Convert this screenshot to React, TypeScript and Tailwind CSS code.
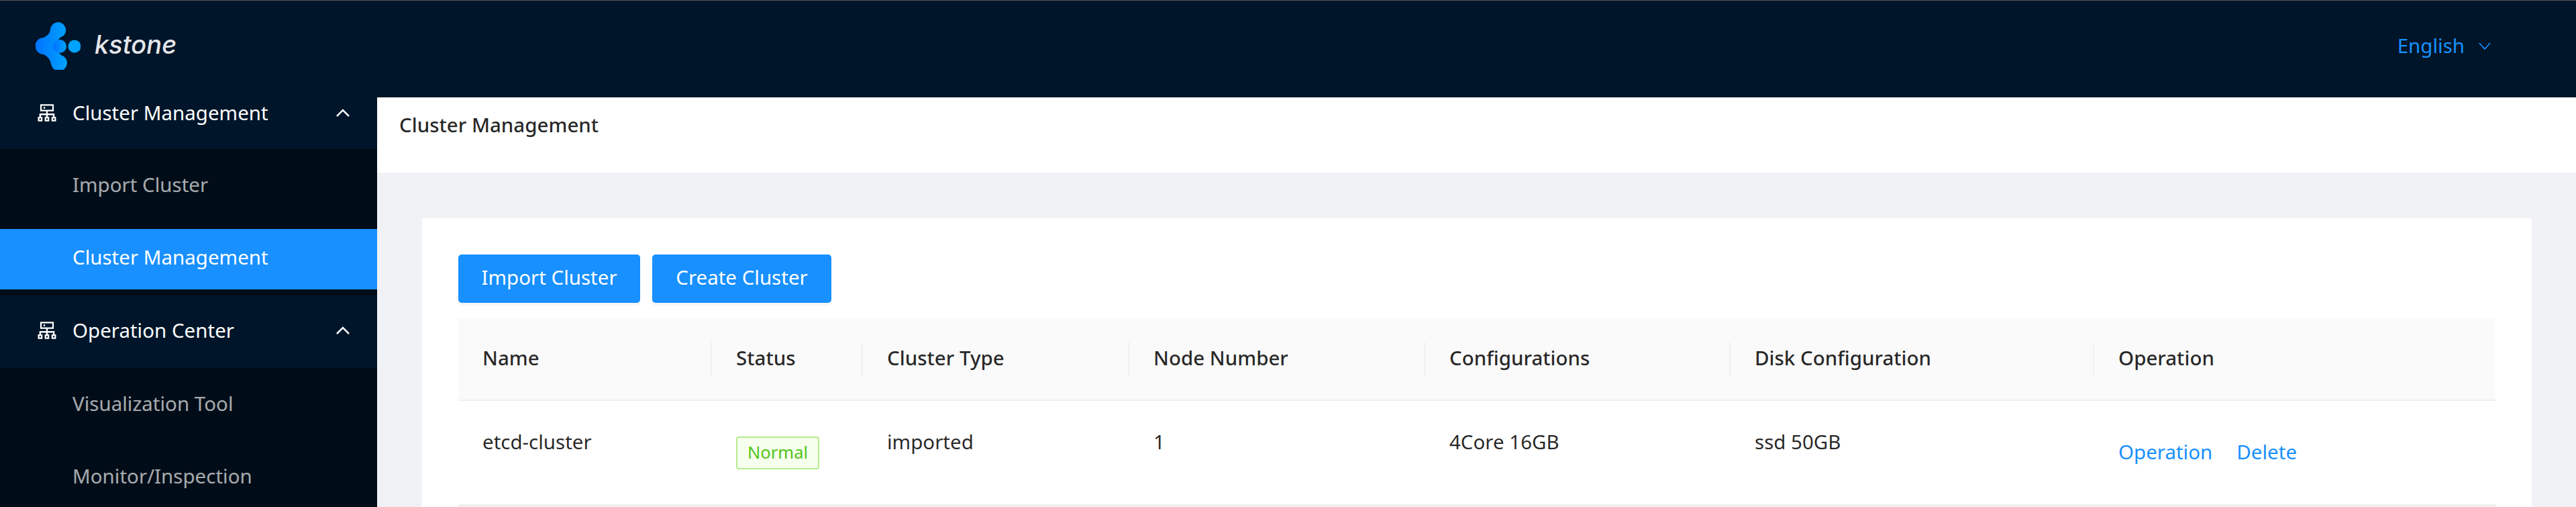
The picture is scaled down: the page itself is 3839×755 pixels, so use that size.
import { AiOutlineCluster } from 'react-icons/ai';

const columns = [
  { title: 'Name', width: 'w-[378px]' },
  { title: 'Status', width: 'w-[225px]' },
  { title: 'Cluster Type', width: 'w-[397px]' },
  { title: 'Node Number', width: 'w-[441px]' },
  { title: 'Configurations', width: 'w-[455px]' },
  { title: 'Disk Configuration', width: 'w-[542px]' },
  { title: 'Operation', width: 'flex-1' },
];

const Chevron = ({ className, points }: { className: string; points: string }) => (
  <svg viewBox="0 0 20 12" className={className} fill="none" stroke="currentColor">
    <polyline points={points} />
  </svg>
);

const Logo = () => (
  <svg viewBox="0 0 67 71" className="h-[71px] w-[67px] shrink-0">
    <defs>
      <linearGradient id="logoBlue" x1="0" x2="1" y1="0" y2="0">
        <stop offset="0" stopColor="#0072ff" />
        <stop offset="1" stopColor="#00a2ff" />
      </linearGradient>
    </defs>
    <path
      d="M34 0a12 12 0 0 1 8 20a17 17 0 0 0-11 16a17 17 0 0 0 11 15a12 12 0 1 1-19 11c-1-6-5-11-11-14a12.5 12.5 0 0 1 0-25c6-3 10-7 10-13a12 12 0 0 1 12-10z"
      fill="url(#logoBlue)"
    />
    <circle cx="36" cy="36" r="10" fill="url(#logoBlue)" />
    <circle cx="58" cy="36" r="9.5" fill="#00a2ff" />
  </svg>
);

const SubItem = ({ label, active }: { label: string; active?: boolean }) => (
  <div
    className={`mb-[18px] flex h-[90px] items-center pb-[6px] pl-[108px] ${
      active ? 'bg-[#1890ff] text-white' : 'text-white/65'
    }`}
  >
    {label}
  </div>
);

const GroupTitle = ({ label, className }: { label: string; className: string }) => (
  <div className={`flex items-center bg-[#001529] pl-[52px] pr-[41px] text-white ${className}`}>
    <AiOutlineCluster className="mr-[20px] h-[36px] w-[36px]" />
    <span className="flex-1">{label}</span>
    <Chevron className="h-[12px] w-[20px] stroke-[2.5px]" points="1,11 10,2 19,11" />
  </div>
);

const App = () => {
  return (
    <div className="flex h-[755px] w-[3839px] flex-col overflow-hidden bg-[#f0f2f5] font-['Noto_Sans',sans-serif] text-[29.5px]">
      <header className="flex h-[145px] shrink-0 items-center border-t border-t-[#555] bg-[#001529] pb-[10px] pl-[53px] pr-[127px]">
        <Logo />
        <span className="ml-[21px] flex-1 pb-[4px] font-['Inter',sans-serif] text-[38px] font-medium italic leading-none text-[#e4e6ea]">
          kstone
        </span>
        <span className="text-[#1890ff]">English</span>
        <Chevron
          className="ml-[21px] mt-[1px] h-[13px] w-[18px] stroke-[1.8px] text-[#1890ff]"
          points="1,1 10,11 19,1"
        />
      </header>

      <div className="flex min-h-0 flex-1">
        <aside className="w-[562px] shrink-0 bg-[#000c17]">
          <GroupTitle label="Cluster Management" className="h-[77px] pb-[31px]" />
          <div className="h-[11px]" />
          <SubItem label="Import Cluster" />
          <SubItem label="Cluster Management" active />
          <div className="-mt-[9px]">
            <GroupTitle label="Operation Center" className="h-[108px] pb-[4px]" />
          </div>
          <div className="h-[11px]" />
          <SubItem label="Visualization Tool" />
          <SubItem label="Monitor/Inspection" />
        </aside>

        <main className="min-w-0 flex-1">
          <div className="flex h-[112px] items-center bg-white pb-[30px] pl-[33px] font-medium text-[#000000d9]">
            Cluster Management
          </div>
          <section className="ml-[67px] mr-[66px] mt-[68px] h-[500px] bg-white px-[54px] pt-[54px]">
            <div className="flex gap-[18px]">
              <button className="h-[72px] w-[271px] rounded-[5px] bg-[#1890ff] pb-[4px] text-white shadow-[0_4.5px_0_#00000008]">
                Import Cluster
              </button>
              <button className="h-[72px] w-[267px] rounded-[5px] bg-[#1890ff] pb-[4px] text-white shadow-[0_4.5px_0_#00000008]">
                Create Cluster
              </button>
            </div>

            <div className="mt-[23px] flex h-[123px] items-center border-b-2 border-[#f0f0f0] bg-[#fafafa] font-medium text-[#000000d9]">
              {columns.map((col, i) => (
                <div key={col.title} className={`${col.width} relative pb-[3px] pl-[36px]`}>
                  {col.title}
                  {i > 0 && (
                    <div className="absolute left-[-2px] top-1/2 h-[51px] w-[2px] -translate-y-1/2 bg-[#f0f0f0]" />
                  )}
                </div>
              ))}
            </div>

            <div className="flex h-[158px] border-b-4 border-[#f0f0f0] text-[#000000d9]">
              <div className="w-[378px] pl-[36px] pt-[39px]">etcd-cluster</div>
              <div className="w-[225px] pl-[36px] pt-[53px]">
                <span className="inline-flex h-[49px] w-[124px] items-center justify-center rounded-[4px] border-2 border-[#b7eb8f] bg-[#f6ffed] pb-[2px] text-[25.5px] text-[#52c41a]">
                  Normal
                </span>
              </div>
              <div className="w-[397px] pl-[36px] pt-[39px]">imported</div>
              <div className="w-[441px] pl-[36px] pt-[39px]">1</div>
              <div className="w-[455px] pl-[36px] pt-[39px]">4Core 16GB</div>
              <div className="w-[542px] pl-[36px] pt-[39px]">ssd 50GB</div>
              <div className="flex flex-1 gap-[36px] pl-[36px] pt-[54px] text-[#1890ff]">
                <span>Operation</span>
                <span>Delete</span>
              </div>
            </div>
          </section>
        </main>
      </div>
    </div>
  );
};

export default App;
